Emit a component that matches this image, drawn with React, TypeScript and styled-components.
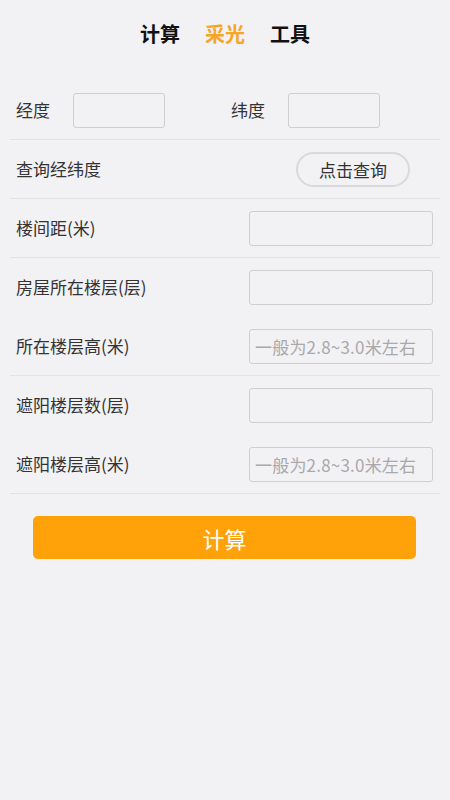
import React from "react";
import styled, { createGlobalStyle } from "styled-components";

const Global = createGlobalStyle`
  html, body { margin: 0; padding: 0; background: #f2f1f4; }
  body { font-family: "Noto Sans CJK SC", "Noto Sans", sans-serif; }
  * { box-sizing: border-box; }
`;

const Page = styled.div`
  width: 450px;
  min-height: 800px;
  background: #f2f1f4;
  display: flex;
  flex-direction: column;
`;

const Tabs = styled.div`
  height: 81px;
  display: flex;
  justify-content: center;
  align-items: flex-start;
  padding-top: 19px;
  gap: 25px;
`;

const Tab = styled.div<{ $active?: boolean }>`
  font-size: 20px;
  font-weight: 700;
  line-height: 30px;
  color: ${(p) => (p.$active ? "#f6a524" : "#111")};
`;

const Form = styled.div`
  margin: 0 10px;
  display: flex;
  flex-direction: column;
`;

const Row = styled.div<{ $divider?: boolean }>`
  height: 59px;
  display: flex;
  align-items: center;
  justify-content: space-between;
  padding: 0 7px 0 6px;
  border-bottom: 1px solid ${(p) => (p.$divider ? "#e2e1e4" : "transparent")};
`;

const HalfRow = styled.div<{ $divider?: boolean }>`
  height: 59px;
  display: flex;
  align-items: center;
  border-bottom: 1px solid ${(p) => (p.$divider ? "#e2e1e4" : "transparent")};
`;

const Half = styled.div`
  width: 215px;
  display: flex;
  align-items: center;
  padding-left: 6px;
`;

const Label = styled.div<{ $w?: number }>`
  font-size: 17px;
  color: #333;
  line-height: 24px;
  ${(p) => (p.$w ? `width: ${p.$w}px;` : "")}
`;

const Input = styled.input<{ $w: number }>`
  width: ${(p) => p.$w}px;
  height: 35px;
  border: 1px solid #cfcfd1;
  border-radius: 3px;
  background: #f2f1f4;
  font-family: "Noto Sans CJK SC", "Noto Sans", sans-serif;
  font-size: 17px;
  color: #333;
  padding: 0 5px;
  outline: none;
  &::placeholder { color: #a9a9ab; letter-spacing: 0.2px; }
`;

const Pill = styled.button`
  width: 114px;
  height: 35px;
  margin-right: 23px;
  border: 2px solid #d9d8db;
  border-radius: 18px;
  background: #f2f1f4;
  font-family: "Noto Sans CJK SC", "Noto Sans", sans-serif;
  font-size: 17px;
  color: #333;
  padding: 0;
`;

const CalcButton = styled.button`
  margin: 22px 0 0 33px;
  width: 383px;
  height: 43px;
  border: none;
  border-radius: 5px;
  background: #ffa20a;
  color: #fff;
  font-family: "Noto Sans CJK SC", "Noto Sans", sans-serif;
  font-size: 22px;
  padding: 0;
`;

export default function App() {
  const hint = "一般为2.8~3.0米左右";
  return (
    <Page>
      <Global />
      <Tabs>
        <Tab>计算</Tab>
        <Tab $active>采光</Tab>
        <Tab>工具</Tab>
      </Tabs>
      <Form>
        <HalfRow $divider>
          <Half>
            <Label $w={57}>经度</Label>
            <Input $w={92} />
          </Half>
          <Half>
            <Label $w={57}>纬度</Label>
            <Input $w={92} />
          </Half>
        </HalfRow>
        <Row $divider>
          <Label>查询经纬度</Label>
          <Pill>点击查询</Pill>
        </Row>
        <Row $divider>
          <Label>楼间距(米)</Label>
          <Input $w={184} />
        </Row>
        <Row>
          <Label>房屋所在楼层(层)</Label>
          <Input $w={184} />
        </Row>
        <Row $divider>
          <Label>所在楼层高(米)</Label>
          <Input $w={184} placeholder={hint} />
        </Row>
        <Row>
          <Label>遮阳楼层数(层)</Label>
          <Input $w={184} />
        </Row>
        <Row $divider>
          <Label>遮阳楼层高(米)</Label>
          <Input $w={184} placeholder={hint} />
        </Row>
      </Form>
      <CalcButton>计算</CalcButton>
    </Page>
  );
}
